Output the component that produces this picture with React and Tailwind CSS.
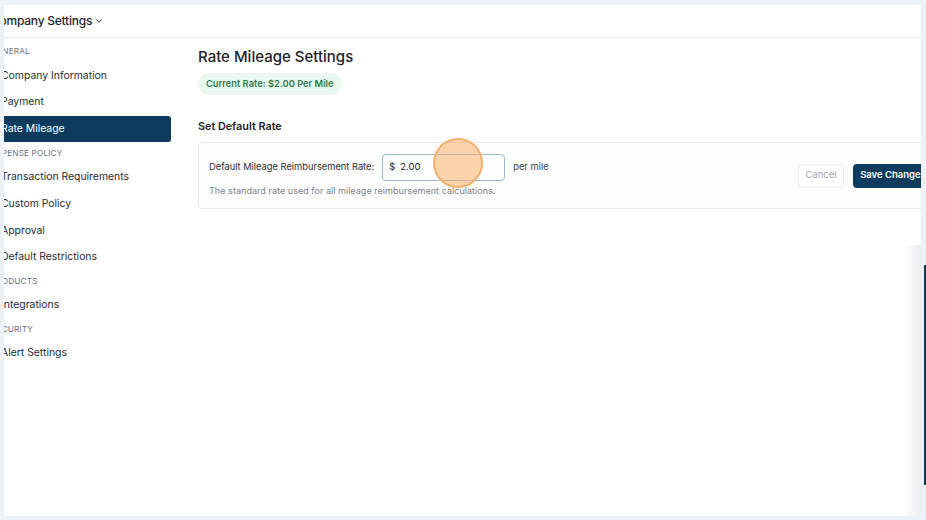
import { ChevronDown } from 'lucide-react';

const sections = [
    { label: 'General', items: ['Company Information', 'Payment', 'Rate Mileage'] },
    {
        label: 'Expense Policy',
        items: ['Transaction Requirements', 'Custom Policy', 'Approval', 'Default Restrictions'],
    },
    { label: 'Products', items: ['Integrations'] },
    { label: 'Security', items: ['Alert Settings'] },
];

function Sidebar({ active }) {
    return (
        <aside className="w-[180px] shrink-0 pt-[2.8px]">
            {sections.map((section) => (
                <div key={section.label}>
                    <div className="flex h-[21.4px] items-center text-[8.2px] uppercase tracking-[0.02em] text-[#6b7280]">
                        {section.label}
                    </div>
                    {section.items.map((item) => (
                        <div
                            key={item}
                            className={
                                item === active
                                    ? 'flex h-[26.7px] items-center rounded-r-[3px] bg-[#0d3b5e] pl-[10px] pr-[8px] text-[10.4px] text-white'
                                    : 'flex h-[26.7px] items-center pl-[10px] pr-[8px] text-[10.4px] text-[#262a31]'
                            }
                        >
                            {item}
                        </div>
                    ))}
                </div>
            ))}
        </aside>
    );
}

export default function App() {
    return (
        <div className="relative h-[520px] w-[926px] overflow-hidden bg-[#eef1f6] pb-[4px] pl-[4px] pr-[5px] pt-[5px] font-['Inter',sans-serif]">
            <div className="relative h-full overflow-hidden bg-white">
                <div className="-ml-[13px] w-[975px]">
                    {/* Header */}
                    <div className="flex h-[33px] items-center border-b border-[#ebedf0]">
                        <span className="text-[12px] font-medium tracking-[-0.02em] text-[#1f2329]">
                            Company Settings
                        </span>
                        <ChevronDown className="ml-[2px] h-[10px] w-[10px] text-[#1f2329]" strokeWidth={2.4} />
                    </div>

                    <div className="flex gap-[27px]">
                        <Sidebar active="Rate Mileage" />

                        {/* Main */}
                        <main className="flex-1 pr-[22px] pt-[7px]">
                            <h1 className="text-[15px] font-medium leading-[24px] text-[#1f2329]">
                                Rate Mileage Settings
                            </h1>
                            <div className="mt-[4px] inline-flex h-[22px] items-center rounded-full bg-[#ebf8ef] px-[8px] text-[9.3px] font-semibold text-[#2f7a4d]">
                                Current Rate: $2.00 Per Mile
                            </div>

                            <h2 className="mt-[22px] text-[10.8px] font-semibold leading-[20px] text-[#1f2329]">
                                Set Default Rate
                            </h2>

                            <div className="mt-[5px] flex items-center justify-between rounded-[4px] border border-[#e8eaed] bg-[#fdfdfd] px-[10px] py-[10.5px]">
                                <div>
                                    <div className="flex items-center gap-[8px]">
                                        <span className="text-[9.3px] text-[#2a2e35]">
                                            Default Mileage Reimbursement Rate:
                                        </span>
                                        <div className="flex h-[27px] w-[123px] items-center rounded-[4px] border border-[#9bb8d8] bg-white px-[6px] text-[9.5px] text-[#1f2329]">
                                            <span>$</span>
                                            <span className="ml-[5px]">2.00</span>
                                        </div>
                                        <span className="text-[9.4px] text-[#3a3f47]">per mile</span>
                                    </div>
                                    <p className="mt-[3px] text-[9.1px] leading-[14px] text-[#80858d]">
                                        The standard rate used for all mileage reimbursement calculations.
                                    </p>
                                </div>

                                <div className="flex items-center gap-[9px]">
                                    <button className="h-[24px] w-[46px] rounded-[4px] border border-[#eceef1] bg-white text-[9.5px] text-[#a3a8b0]">
                                        Cancel
                                    </button>
                                    <button className="h-[24px] w-[80px] rounded-[4px] bg-[#0d3b5e] text-[9.5px] font-semibold text-white">
                                        Save Changes
                                    </button>
                                </div>
                            </div>
                        </main>
                    </div>
                </div>

                {/* Click indicator */}
                <div className="absolute left-[429px] top-[133px] h-[50px] w-[50px] rounded-full border-2 border-[#f2b26c] bg-[#f7a85c]/50" />

                {/* Edge shade */}
                <div className="absolute bottom-0 right-0 top-[240px] w-[18px] bg-gradient-to-r from-transparent to-[#eeeef1]" />
            </div>

            <div className="absolute right-0 top-[265px] h-[220px] w-[2px] bg-[#0d3b5e]" />
        </div>
    );
}
